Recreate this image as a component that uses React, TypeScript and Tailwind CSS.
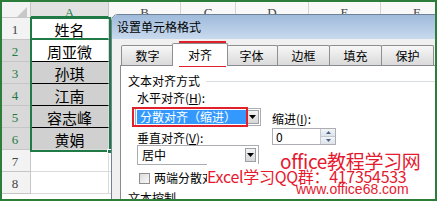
const GREEN = "border-[#1f7a45]";

const rows = [
  { n: 1, name: "姓名", sel: false, fill: false },
  { n: 2, name: "周亚微", sel: true, fill: false },
  { n: 3, name: "孙琪", sel: true, fill: true },
  { n: 4, name: "江南", sel: true, fill: true },
  { n: 5, name: "容志峰", sel: true, fill: true },
  { n: 6, name: "黄娟", sel: true, fill: true },
  { n: 7, name: "", sel: false, fill: false },
  { n: 8, name: "", sel: false, fill: false },
];

function Sheet() {
  return (
    <div className="flex flex-col">
      {/* column headers */}
      <div className="flex h-[18px] font-['Liberation_Serif',serif] text-[13px] leading-none text-[#444]">
        <div className="relative w-[31px] shrink-0 border-r border-b border-[#c6c6c6] bg-[#f3f3f3]">
          <svg className="absolute left-[17px] top-[7px]" width="10" height="10" viewBox="0 0 10 10">
            <polygon points="10,0 10,10 0,10" fill="#c8c8c8" />
          </svg>
        </div>
        <div className="w-[78px] shrink-0 flex justify-center pt-[6px] border-r border-[#c6c6c6] border-b-2 border-b-[#1f7a45] bg-[#e1e1e1] text-[#1f7a45]">
          A
        </div>
        <div className="w-[72px] shrink-0 flex justify-center pt-[6px] border-r border-b border-[#d4d4d4] bg-[#f8f8f8]">B</div>
        <div className="w-[55px] shrink-0 flex justify-center pt-[6px] border-r border-b border-[#d4d4d4] bg-[#f8f8f8]">C</div>
        <div className="w-[73px] shrink-0 flex justify-center pt-[6px] border-r border-b border-[#d4d4d4] bg-[#f8f8f8]">D</div>
        <div className="w-[72px] shrink-0 flex justify-center pt-[6px] border-r border-b border-[#d4d4d4] bg-[#f8f8f8]">E</div>
        <div className="w-[72px] shrink-0 flex justify-center pt-[6px] border-r border-b border-[#d4d4d4] bg-[#f8f8f8]">F</div>
      </div>

      {rows.map((r) => (
        <div key={r.n} className="flex h-[22px]">
          <div
            className={
              r.sel
                ? "w-[31px] shrink-0 flex items-end justify-center pb-[3px] border-r border-b border-[#c6c6c6] bg-[#d9d9d9] font-['Liberation_Serif',serif] text-[13px] leading-none text-[#1f7a45]"
                : "w-[31px] shrink-0 flex items-end justify-center pb-[3px] border-r border-b border-[#c6c6c6] bg-[#f3f3f3] font-['Liberation_Serif',serif] text-[13px] leading-none text-[#444]"
            }
          >
            {r.n}
          </div>
          <div
            className={
              (r.fill ? "bg-[#d0d0d0] " : "bg-white ") +
              (r.n === 1
                ? "border-b-2 border-b-[#1f7a45] "
                : r.n >= 2 && r.n <= 5
                ? "border-b border-b-black "
                : "border-b border-b-[#dadada] ") +
              "w-[78px] shrink-0 flex items-center justify-center pt-[2px] border-r border-r-[#dadada] text-[15px] text-black leading-none"
            }
          >
            {r.name}
          </div>
          <div className="w-[72px] shrink-0 border-r border-b border-[#dadada]" />
          <div className="w-[55px] shrink-0 border-r border-b border-[#dadada]" />
          <div className="w-[73px] shrink-0 border-r border-b border-[#dadada]" />
          <div className="w-[72px] shrink-0 border-r border-b border-[#dadada]" />
        </div>
      ))}
    </div>
  );
}

function Arrow() {
  return (
    <svg width="7" height="4" viewBox="0 0 7 4">
      <polygon points="0,0 7,0 3.5,4" fill="#000" />
    </svg>
  );
}

function Dialog() {
  const tab =
    "w-[53px] h-[20px] -ml-px border border-b-0 border-[#8e8f8f] rounded-t-[2px] bg-linear-to-b from-[#f7f7f7] to-[#dadada] flex items-center justify-center text-[12px] leading-none";
  return (
    <div className="absolute left-[111px] top-[14px] w-[340px] h-[200px] rounded-tl-[7px] border border-[#6f8296] bg-[#f0f0f0] overflow-hidden flex flex-col">
      <div className="h-[24px] shrink-0 flex items-center pl-[5px] bg-linear-to-b from-[#9fbadb] to-[#c8daee] text-[12px] text-black">
        设置单元格格式
      </div>

      <div className="h-[26px] shrink-0 flex items-end pl-[10px]">
        <div className={tab}>数字</div>
        <div className="relative z-10 w-[56px] h-[23px] -mx-[2px] -mb-px border border-b-0 border-[#8e8f8f] rounded-t-[2px] bg-white flex items-center justify-center text-[12px] leading-none">
          对齐
        </div>
        <div className={tab}>字体</div>
        <div className={tab}>边框</div>
        <div className={tab}>填充</div>
        <div className={tab}>保护</div>
      </div>

      <div className="ml-[8px] flex-1 border border-[#898c95] bg-white text-[12px] leading-[14px] text-black">
        <div className="flex items-center mt-[8px] pl-[7px]">
          <span>文本对齐方式</span>
          <div className="flex-1 ml-[6px] h-px bg-[#d5dfe5]" />
        </div>
        <div className="mt-[3px] pl-[16px]">
          水平对齐(<span className="underline">H</span>):
        </div>
        <div className="flex mt-[3px]">
          <div className="ml-[14px] w-[126px] flex flex-col">
            <div className="h-[18px] flex border border-[#abadb3] bg-white p-[1px]">
              <div className="flex-1 flex items-center pl-[3px] bg-[#3399ff] text-white">分散对齐（缩进）</div>
              <div className="w-[13px] flex items-center justify-center border border-[#9aa0a6] bg-linear-to-b from-[#f4f4f4] to-[#d6d6d6]">
                <Arrow />
              </div>
            </div>
            <div className="mt-[5px] pl-[2px]">
              垂直对齐(<span className="underline">V</span>):
            </div>
            <div className="ml-[2px] w-[122px] h-[20px] flex border border-[#abadb3] bg-white p-[2px]">
              <div className="flex-1 flex items-center pl-[2px]">居中</div>
              <div className="w-[11px] flex items-center justify-center border border-[#9aa0a6] bg-linear-to-b from-[#f4f4f4] to-[#d6d6d6]">
                <Arrow />
              </div>
            </div>
            <div className="mt-[6px] ml-[4px] flex items-center">
              <div className="w-[11px] h-[11px] border border-[#8f8f8f] bg-linear-to-br from-[#dcdcdc] to-[#f8f8f8]" />
              <span className="ml-[4px]">两端分散对齐</span>
            </div>
          </div>
          <div className="ml-[11px] flex flex-col">
            <div className="mt-[4px]">
              缩进(<span className="underline">I</span>):
            </div>
            <div className="mt-[2px] w-[64px] h-[17px] flex border border-[#abadb3] bg-white">
              <div className="flex-1 flex items-center pl-[3px]">0</div>
              <div className="w-[15px] flex flex-col border-l border-[#c3c9d0]">
                <div className="flex-1 flex items-center justify-center bg-linear-to-b from-[#f2f5f8] to-[#dde4ea] border-b border-[#c3c9d0]">
                  <svg width="5" height="3" viewBox="0 0 5 3">
                    <polygon points="0,3 5,3 2.5,0" fill="#4d6185" />
                  </svg>
                </div>
                <div className="flex-1 flex items-center justify-center bg-linear-to-b from-[#f2f5f8] to-[#dde4ea]">
                  <svg width="5" height="3" viewBox="0 0 5 3">
                    <polygon points="0,0 5,0 2.5,3" fill="#4d6185" />
                  </svg>
                </div>
              </div>
            </div>
          </div>
        </div>
        <div className="mt-[6px] pl-[7px]">文本控制</div>
      </div>
    </div>
  );
}

function Watermark() {
  return (
    <>
      <div className="absolute left-[280px] top-[151px] text-[19px] leading-none tracking-[-0.3px] text-[#e5192f] whitespace-nowrap">
        office教程学习网
      </div>
      <div className="absolute left-[207px] top-[168px] text-[16px] leading-none tracking-[-0.3px] text-[#e5192f] whitespace-nowrap">
        <span className="bg-white">Excel学习</span>QQ群：417354533
      </div>
      <div className="absolute left-[296px] top-[182px] font-['Liberation_Sans',sans-serif] text-[14px] leading-none text-[#e5192f] whitespace-nowrap">
        www.office68.com
      </div>
    </>
  );
}

export default function App() {
  return (
    <div className="relative w-[437px] h-[201px] overflow-hidden bg-white font-['Noto_Sans_CJK_SC',sans-serif]">
      <Sheet />
      {/* selection outline A1:A6 */}
      <div className={"absolute left-[30px] top-[17px] w-[81px] h-[135px] border-2 " + GREEN} />
      <div className="absolute left-[107px] top-[149px] w-[5px] h-[5px] bg-[#1f7a45] border border-white" />
      <Dialog />
      {/* red highlight boxes */}
      <div className="absolute left-[179px] top-[41px] w-[47px] h-[26px] border-2 border-[#e0202a]" />
      <div className="absolute left-[132px] top-[107px] w-[116px] h-[20px] border-2 border-[#e0202a]" />
      <Watermark />
      <div className="pointer-events-none absolute inset-0 border-2 border-[#2d7d3a]" />
    </div>
  );
}
